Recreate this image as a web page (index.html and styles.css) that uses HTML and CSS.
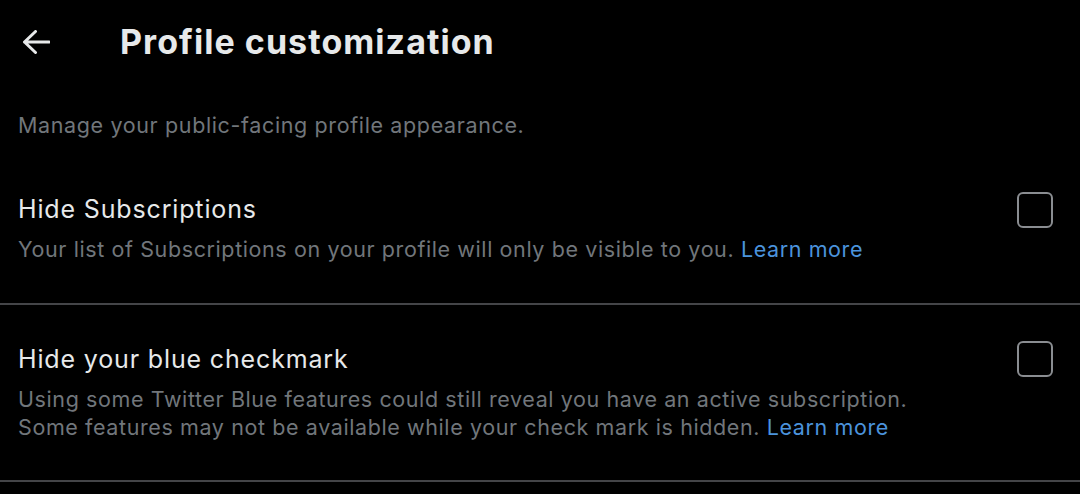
FILE: index.html
```html
<!DOCTYPE html>
<html lang="en">
<head>
<meta charset="utf-8">
<title>Profile customization</title>
<link rel="stylesheet" href="styles.css">
</head>
<body>
<div class="page">
  <header class="header">
    <button class="back" aria-label="Back">
      <svg viewBox="0 0 28 24" width="28" height="24" aria-hidden="true">
        <path d="M2.5 12 H27 M13.5 1.5 L2.5 12 L13.5 22.5" fill="none" stroke="#e7e9ea" stroke-width="3" stroke-linecap="round" stroke-linejoin="round"/>
      </svg>
    </button>
    <h1 class="title">Profile customization</h1>
  </header>
  <p class="intro">Manage your public-facing profile appearance.</p>
  <section class="setting first">
    <div class="setting-text">
      <div class="setting-label">Hide Subscriptions</div>
      <div class="setting-desc">Your list of Subscriptions on your profile will only be visible to you. <a class="link" href="#">Learn more</a></div>
    </div>
    <span class="checkbox" role="checkbox" aria-checked="false"></span>
  </section>
  <section class="setting second">
    <div class="setting-text">
      <div class="setting-label">Hide your blue checkmark</div>
      <div class="setting-desc">Using some Twitter Blue features could still reveal you have an active subscription.<br>Some features may not be available while your check mark is hidden. <a class="link" href="#">Learn more</a></div>
    </div>
    <span class="checkbox" role="checkbox" aria-checked="false"></span>
  </section>
</div>
</body>
</html>
```

FILE: styles.css
```css
html, body {
  margin: 0;
  padding: 0;
  background: #000;
}
body {
  font-family: "Inter", "Noto Sans", "Liberation Sans", sans-serif;
  color: #e7e9ea;
  width: 1080px;
  height: 494px;
  overflow: hidden;
}
.header {
  height: 84px;
  display: flex;
  align-items: center;
  padding-left: 22px;
}
.back {
  width: 30px;
  height: 26px;
  padding: 0;
  margin: 0;
  border: 0;
  background: none;
  display: flex;
  align-items: center;
  justify-content: flex-start;
}
.title {
  margin: 0 0 0 68px;
  font-size: 34px;
  font-weight: 700;
  line-height: 40px;
  letter-spacing: 1.05px;
  color: #e7e9ea;
}
.intro {
  margin: 27px 0 0;
  padding-left: 18px;
  font-size: 21.5px;
  line-height: 28px;
  letter-spacing: 0.63px;
  color: #71767b;
}
.setting {
  display: flex;
  align-items: flex-start;
  justify-content: space-between;
  padding-left: 18px;
  padding-right: 27px;
  border-bottom: 2px solid #444548;
}
.setting.first {
  padding-top: 55px;
  padding-bottom: 39px;
}
.setting.second {
  padding-top: 39px;
  padding-bottom: 38px;
}
.setting-label {
  font-size: 25px;
  line-height: 30px;
  letter-spacing: 0.85px;
  color: #e7e9ea;
}
.setting-desc {
  margin-top: 11px;
  font-size: 21.5px;
  line-height: 28.5px;
  letter-spacing: 0.6px;
  color: #71767b;
}
.link {
  color: #4b93dc;
  text-decoration: none;
}
.checkbox {
  flex: none;
  box-sizing: border-box;
  width: 36px;
  height: 36px;
  margin-top: -2.5px;
  border: 2.5px solid #8a8d91;
  border-radius: 6px;
}
```
